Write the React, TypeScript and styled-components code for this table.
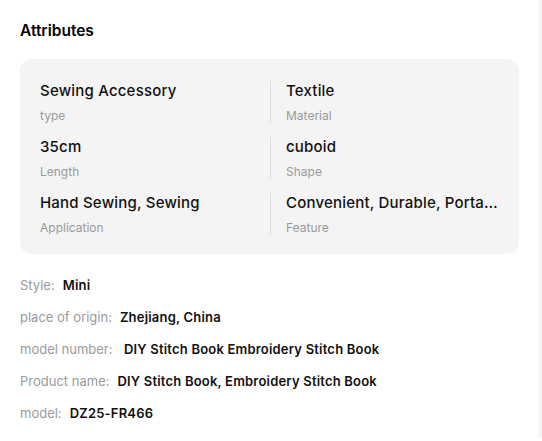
import React from 'react';
import styled, { createGlobalStyle } from 'styled-components';

const GlobalStyle = createGlobalStyle`
  html, body {
    margin: 0;
    padding: 0;
    background: #ffffff;
  }
  body {
    font-family: Inter, "Noto Sans", "Liberation Sans", sans-serif;
    color: #111111;
  }
`;

const Page = styled.div`
  display: flex;
  width: 542px;
  height: 441px;
  overflow: hidden;
`;

const Main = styled.div`
  flex: 1;
  min-width: 0;
  padding: 21px 20px 0 20px;
`;

const Gutter = styled.div`
  width: 3px;
  height: 437px;
  background: #f4f4f4;
`;

const Title = styled.h2`
  margin: 0 0 18px 0;
  font-size: 15.5px;
  line-height: 20px;
  font-weight: 600;
  color: #000;
`;

const Card = styled.div`
  background: #f4f4f4;
  border-radius: 12px;
  padding: 22px 20px 19px 20px;
  display: grid;
  grid-template-columns: 230px 1fr;
  row-gap: 14px;
`;

const Cell = styled.div<{ $divider?: boolean }>`
  min-width: 0;
  display: flex;
  flex-direction: column;
  border-left: ${p => (p.$divider ? '1px solid #dcdcdc' : 'none')};
  padding-left: ${p => (p.$divider ? '15px' : '0')};
`;

const Value = styled.div`
  font-size: 15px;
  line-height: 20px;
  font-weight: 500;
  letter-spacing: 0.2px;
  color: #111;
  white-space: nowrap;
  overflow: hidden;
  text-overflow: ellipsis;
`;

const Label = styled.div`
  margin-top: 8px;
  font-size: 12px;
  line-height: 14px;
  color: #9a9a9a;
`;

const List = styled.div`
  display: flex;
  flex-direction: column;
  gap: 14px;
  margin-top: 22px;
`;

const Row = styled.div`
  display: flex;
  align-items: baseline;
  gap: 8px;
  font-size: 13px;
  line-height: 18px;
`;

const Key = styled.span`
  color: #9a9a9a;
`;

const Val = styled.span`
  color: #111;
  font-weight: 600;
  letter-spacing: 0.2px;
  white-space: pre;
`;

const attributes = [
  { value: 'Sewing Accessory', label: 'type' },
  { value: 'Textile', label: 'Material' },
  { value: '35cm', label: 'Length' },
  { value: 'cuboid', label: 'Shape' },
  { value: 'Hand Sewing, Sewing', label: 'Application' },
  { value: 'Convenient, Durable, Portable, Lightweight', label: 'Feature' },
];

const details = [
  { key: 'Style:', value: 'Mini' },
  { key: 'place of origin:', value: 'Zhejiang, China' },
  { key: 'model number:', value: ' DIY Stitch Book Embroidery Stitch Book' },
  { key: 'Product name:', value: 'DIY Stitch Book, Embroidery Stitch Book' },
  { key: 'model:', value: 'DZ25-FR466' },
];

export default function App() {
  return (
    <Page>
      <GlobalStyle />
      <Main>
        <Title>Attributes</Title>
        <Card>
          {attributes.map((a, i) => (
            <Cell key={a.label} $divider={i % 2 === 1}>
              <Value title={a.value}>{a.value}</Value>
              <Label>{a.label}</Label>
            </Cell>
          ))}
        </Card>
        <List>
          {details.map(d => (
            <Row key={d.key}>
              <Key>{d.key}</Key>
              <Val>{d.value}</Val>
            </Row>
          ))}
        </List>
      </Main>
      <Gutter />
    </Page>
  );
}
